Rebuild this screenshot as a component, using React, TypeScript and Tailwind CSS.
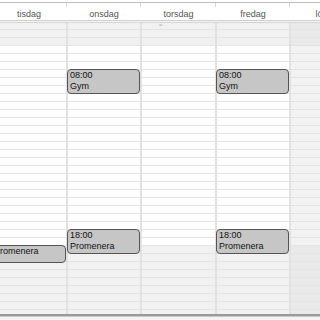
import React from "react";

type CalEvent = { top: number; height: number; time?: string; title: string };

type Day = {
  name: string;
  width: string;
  weekend?: boolean;
  events: CalEvent[];
};

const DAYS: Day[] = [
  {
    name: "tisdag",
    width: "w-[74px]",
    events: [{ top: 222, height: 18, title: "Promenera" }],
  },
  {
    name: "onsdag",
    width: "w-[74px]",
    events: [
      { top: 46, height: 25, time: "08:00", title: "Gym" },
      { top: 206, height: 25, time: "18:00", title: "Promenera" },
    ],
  },
  { name: "torsdag", width: "w-[75px]", events: [] },
  {
    name: "fredag",
    width: "w-[74px]",
    events: [
      { top: 46, height: 25, time: "08:00", title: "Gym" },
      { top: 206, height: 25, time: "18:00", title: "Promenera" },
    ],
  },
  { name: "lördag", width: "w-[76px]", weekend: true, events: [] },
];

// first row is shorter so the lines land on the same grid as the events
const ROWS = Array.from({ length: 37 }, (_, i) => i);

function rowClass(i: number, weekend?: boolean) {
  // off hours (before 07:00, after 19:00) are shaded
  const offHours = i < 3 || i >= 28;
  if (weekend) return offHours ? "bg-[#e9e9e9]" : "bg-[#f2f2f2]";
  return offHours ? "bg-[#f1f1f1]" : "bg-white";
}

function EventBox({ ev }: { ev: CalEvent }) {
  return (
    <div
      className="absolute left-[-1px] right-0 rounded-[4px] border border-[#555] bg-[#c6c6c6] px-[2px] text-[9px] leading-[11px] text-[#111]"
      style={{ top: ev.top, height: ev.height }}
    >
      {ev.time && <div>{ev.time}</div>}
      <div>{ev.title}</div>
    </div>
  );
}

function DayColumn({ day, index }: { day: Day; index: number }) {
  return (
    <div
      className={`relative shrink-0 ${day.width} ${
        index > 0 ? "border-l-2 border-[#e1e1e1]" : ""
      }`}
    >
      {ROWS.map((i) => (
        <div
          className={`${i === 0 ? "h-[7px]" : "h-[8px]"} border-b border-[#e4e4e4] ${rowClass(
            i,
            day.weekend
          )}`}
          key={i}
        />
      ))}
      {day.events.map((ev, i) => (
        <EventBox ev={ev} key={i} />
      ))}
    </div>
  );
}

export default function App() {
  return (
    <div
      className="relative h-[320px] w-[320px] overflow-hidden bg-white"
      style={{ fontFamily: '"Liberation Sans", Arial, sans-serif' }}
    >
      <div className="h-[2px] bg-white" />
      <div className="h-px bg-[#bdbdbd]" />
      {/* day header */}
      <div className="-ml-[8px] flex h-[17px] bg-white">
        {DAYS.map((day, i) => (
          <div
            className={`relative flex shrink-0 items-end justify-center text-[9px] leading-[11px] text-[#555] ${day.width} ${
              i > 0 ? "pl-[2px]" : ""
            }`}
            key={day.name}
          >
            {i > 0 && <span className="absolute left-0 top-0 h-[4px] w-px bg-[#d8d8d8]" />}
            {day.name}
          </div>
        ))}
      </div>
      <div className="h-px bg-[#cfcfcf]" />
      <div className="h-px bg-[#f6f6f6]" />
      <div className="h-px bg-[#d4d4d4]" />
      {/* week grid */}
      <div className="relative -ml-[8px] flex h-[291px] overflow-hidden">
        {DAYS.map((day, i) => (
          <DayColumn day={day} index={i} key={day.name} />
        ))}
        <span className="absolute left-[167px] top-0 text-[6px] leading-[4px] text-[#aaa]">
          ≈
        </span>
      </div>
      <div className="h-[2px] bg-[#9a9a9a]" />
      <div className="h-px bg-[#c8c8c8]" />
      <div className="h-[4px] bg-[#f4f4f4]" />
    </div>
  );
}
